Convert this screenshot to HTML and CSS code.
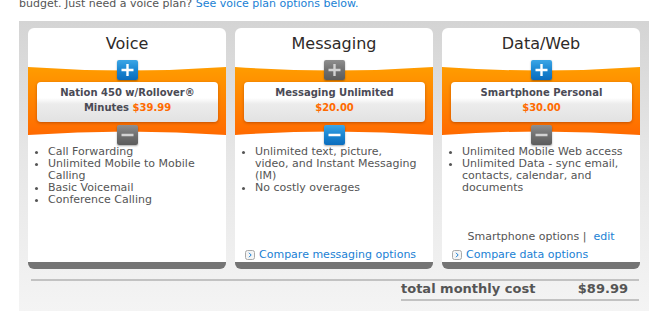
FILE: index.html
```html
<!DOCTYPE html>
<html lang="en">
<head>
    <meta charset="UTF-8">
    <title>Build Your Plan</title>
    <link rel="stylesheet" href="styles.css">
</head>
<body>
    <p class="intro">budget. Just need a voice plan? <a href="#">See voice plan options below.</a></p>

    <div class="plan-panel">
        <div class="plan-cards">

            <!-- Voice -->
            <div class="plan-card">
                <h2 class="plan-title">Voice</h2>
                <div class="selector">
                    <svg class="band" viewBox="0 0 198 68" preserveAspectRatio="none">
                        <defs>
                            <linearGradient id="bandFill1" x1="0" y1="0" x2="0" y2="1">
                                <stop offset="0" stop-color="#ff9c00"/>
                                <stop offset="1" stop-color="#ff6a00"/>
                            </linearGradient>
                        </defs>
                        <path d="M0 0 Q99 7 198 0 L198 68 Q99 61 0 68 Z" fill="url(#bandFill1)"/>
                    </svg>
                    <button class="step step-on" type="button">
                        <svg viewBox="0 0 21 20"><path d="M4.5 10H16.5M10.5 4V16" stroke="#fff" stroke-width="2.4"/></svg>
                    </button>
                    <div class="choice">Nation 450 w/Rollover®<br>Minutes <span class="price">$39.99</span></div>
                    <button class="step step-off" type="button">
                        <svg viewBox="0 0 21 20"><path d="M4.5 10H16.5" stroke="#d2d2d2" stroke-width="2.6"/></svg>
                    </button>
                </div>
                <ul class="features">
                    <li>Call Forwarding</li>
                    <li>Unlimited Mobile to Mobile Calling</li>
                    <li>Basic Voicemail</li>
                    <li>Conference Calling</li>
                </ul>
            </div>

            <!-- Messaging -->
            <div class="plan-card">
                <h2 class="plan-title">Messaging</h2>
                <div class="selector">
                    <svg class="band" viewBox="0 0 198 68" preserveAspectRatio="none">
                        <defs>
                            <linearGradient id="bandFill2" x1="0" y1="0" x2="0" y2="1">
                                <stop offset="0" stop-color="#ff9c00"/>
                                <stop offset="1" stop-color="#ff6a00"/>
                            </linearGradient>
                        </defs>
                        <path d="M0 0 Q99 7 198 0 L198 68 Q99 61 0 68 Z" fill="url(#bandFill2)"/>
                    </svg>
                    <button class="step step-off" type="button">
                        <svg viewBox="0 0 21 20"><path d="M4.5 10H16.5M10.5 4V16" stroke="#d2d2d2" stroke-width="2.4"/></svg>
                    </button>
                    <div class="choice">Messaging Unlimited<br><span class="price">$20.00</span></div>
                    <button class="step step-on" type="button">
                        <svg viewBox="0 0 21 20"><path d="M4.5 10H16.5" stroke="#fff" stroke-width="2.6"/></svg>
                    </button>
                </div>
                <ul class="features">
                    <li>Unlimited text, picture, video, and Instant Messaging (IM)</li>
                    <li>No costly overages</li>
                </ul>
                <div class="card-foot">
                    <a class="compare" href="#">
                        <svg class="compare-icon" viewBox="0 0 10 10">
                            <rect x="0.5" y="0.5" width="9" height="9" rx="2" fill="#f4f4f4" stroke="#a9a9a9"/>
                            <path d="M4 2.8L6.2 5L4 7.2" fill="none" stroke="#1a7fd4" stroke-width="1"/>
                        </svg>Compare messaging options</a>
                </div>
            </div>

            <!-- Data/Web -->
            <div class="plan-card">
                <h2 class="plan-title">Data/Web</h2>
                <div class="selector">
                    <svg class="band" viewBox="0 0 198 68" preserveAspectRatio="none">
                        <defs>
                            <linearGradient id="bandFill3" x1="0" y1="0" x2="0" y2="1">
                                <stop offset="0" stop-color="#ff9c00"/>
                                <stop offset="1" stop-color="#ff6a00"/>
                            </linearGradient>
                        </defs>
                        <path d="M0 0 Q99 7 198 0 L198 68 Q99 61 0 68 Z" fill="url(#bandFill3)"/>
                    </svg>
                    <button class="step step-on" type="button">
                        <svg viewBox="0 0 21 20"><path d="M4.5 10H16.5M10.5 4V16" stroke="#fff" stroke-width="2.4"/></svg>
                    </button>
                    <div class="choice">Smartphone Personal<br><span class="price">$30.00</span></div>
                    <button class="step step-off" type="button">
                        <svg viewBox="0 0 21 20"><path d="M4.5 10H16.5" stroke="#d2d2d2" stroke-width="2.6"/></svg>
                    </button>
                </div>
                <ul class="features">
                    <li>Unlimited Mobile Web access</li>
                    <li>Unlimited Data - sync email, contacts, calendar, and documents</li>
                </ul>
                <div class="card-foot">
                    <p class="options">Smartphone options | &nbsp;<a href="#">edit</a></p>
                    <a class="compare" href="#">
                        <svg class="compare-icon" viewBox="0 0 10 10">
                            <rect x="0.5" y="0.5" width="9" height="9" rx="2" fill="#f4f4f4" stroke="#a9a9a9"/>
                            <path d="M4 2.8L6.2 5L4 7.2" fill="none" stroke="#1a7fd4" stroke-width="1"/>
                        </svg>Compare data options</a>
                </div>
            </div>

        </div>

        <div class="total">
            <div class="total-row">
                <span>total monthly cost</span>
                <span>$89.99</span>
            </div>
        </div>
    </div>
</body>
</html>
```

FILE: styles.css
```css
* {
    margin: 0;
    padding: 0;
    box-sizing: border-box;
}

body {
    font-family: 'DejaVu Sans', Verdana, sans-serif;
    background: #ffffff;
    color: #555;
    overflow: hidden;
}

a {
    color: #1a7fd4;
    text-decoration: none;
}

.intro {
    font-size: 11px;
    line-height: 14px;
    margin: -3px 0 0 19px;
    color: #555;
}

.plan-panel {
    margin: 10px 0 0 19px;
    width: 630px;
    height: 290px;
    padding: 7px 10px 0 9px;
    background: linear-gradient(#d4d4d4 0%, #e6e6e6 45%, #f4f4f4 100%);
}

.plan-cards {
    display: grid;
    grid-template-columns: repeat(3, 198px);
    gap: 9px;
}

.plan-card {
    height: 241px;
    background: #fff;
    border-radius: 6px;
    border-bottom: 7px solid #747474;
    display: flex;
    flex-direction: column;
    overflow: hidden;
}

.plan-title {
    height: 32px;
    line-height: 31px;
    font-size: 16px;
    font-weight: normal;
    text-align: center;
    color: #2e2a28;
}

.selector {
    position: relative;
    display: flex;
    flex-direction: column;
    align-items: center;
}

.band {
    position: absolute;
    top: 7px;
    left: 0;
    width: 100%;
    height: 68px;
}

.step {
    position: relative;
    width: 21px;
    height: 20px;
    border: none;
    border-radius: 2px;
    box-shadow: 0 1px 2px rgba(0, 0, 0, 0.35);
    cursor: pointer;
}

.step svg {
    display: block;
    width: 21px;
    height: 20px;
}

.step-on {
    background: linear-gradient(#3ca6e6 0%, #1a86d2 50%, #0b6cbd 100%);
}

.step-off {
    background: linear-gradient(#8e8e8e 0%, #707070 50%, #5c5c5c 100%);
}

.choice {
    position: relative;
    width: 181px;
    height: 40px;
    margin: 2px 0 3px 1px;
    padding: 3px 4px 7px;
    border-radius: 4px;
    background: linear-gradient(#ffffff 0%, #ffffff 40%, #ececec 55%, #e2e2e2 100%);
    box-shadow: 0 1px 3px rgba(120, 40, 0, 0.45);
    font-size: 10px;
    line-height: 15px;
    font-weight: bold;
    text-align: center;
    color: #4a4a55;
}

.price {
    color: #ff6a00;
}

.features {
    flex: 1;
    margin-top: 1px;
    padding: 0 14px 0 20px;
    font-size: 11px;
    line-height: 12px;
    color: #555;
}

.card-foot {
    padding-left: 10px;
    font-size: 11px;
    line-height: 14px;
}

.options {
    margin: 0 0 4px -10px;
    text-align: center;
    color: #555;
}

.compare {
    display: flex;
    align-items: center;
    gap: 4px;
}

.compare-icon {
    width: 10px;
    height: 10px;
}

.total {
    margin: 10px 0 0 3px;
    border-top: 2px solid #c2c2c2;
}

.total-row {
    margin-left: auto;
    width: 238px;
    display: flex;
    justify-content: space-between;
    padding: 0 11px 2px 0;
    border-bottom: 2px solid #c2c2c2;
    font-size: 13px;
    line-height: 16px;
    font-weight: bold;
    color: #555;
}
```
